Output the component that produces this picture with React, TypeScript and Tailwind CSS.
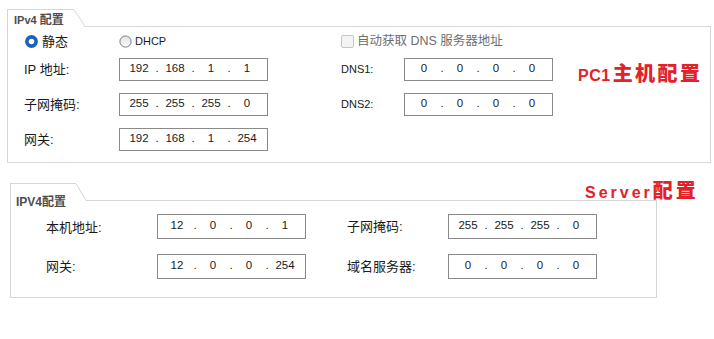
import React, { Fragment } from 'react';

const cjk = "font-['Liberation_Sans','Noto_Sans_CJK_SC',sans-serif]";

const TabHeader = ({ tabClass, slant, children }: { tabClass: string; slant: number; children: React.ReactNode }) => (
  <div className="flex h-[18px]">
    <div className={`border-l border-t border-[#d6d6d6] ${tabClass}`}>{children}</div>
    <svg width={slant} height={18} className="shrink-0">
      <line x1="0" y1="0.5" x2={slant} y2="17.5" stroke="#d6d6d6" strokeWidth="1" />
    </svg>
    <div className="flex-1 border-b border-[#d6d6d6]" />
  </div>
);

const IpBox = ({ parts, tall }: { parts: string[]; tall?: boolean }) => (
  <div
    className={`flex w-[149px] shrink-0 items-center border border-[#8a8a8a] bg-white pb-[2px] pl-[6px] font-['Liberation_Sans',sans-serif] text-[11.5px] text-[#1a1a1a] ${
      tall ? 'h-[25px]' : 'h-[23px]'
    }`}
  >
    {parts.map((p, i) => (
      <Fragment key={i}>
        <span className="w-[26px] text-center">{p}</span>
        {i < 3 && <span className="w-[10px] text-center">.</span>}
      </Fragment>
    ))}
  </div>
);

const Radio = ({ checked }: { checked?: boolean }) =>
  checked ? (
    <svg width="13" height="13" className="shrink-0">
      <circle cx="6.5" cy="6.5" r="4.6" fill="white" stroke="#1862b5" strokeWidth="3.6" />
    </svg>
  ) : (
    <svg width="13" height="13" className="shrink-0">
      <defs>
        <linearGradient id="rg" x1="0" y1="0" x2="0" y2="1">
          <stop offset="0" stopColor="#e4e4e4" />
          <stop offset="1" stopColor="#fafafa" />
        </linearGradient>
      </defs>
      <circle cx="6.5" cy="6.5" r="5.6" fill="url(#rg)" stroke="#7b7b7b" strokeWidth="1" />
    </svg>
  );

const Label = ({ className, children }: { className: string; children: React.ReactNode }) => (
  <div className={`shrink-0 ${cjk} text-[13px] leading-[16px] text-[#1a1a1a] ${className}`}>{children}</div>
);

const DnsLabel = ({ children }: { children: React.ReactNode }) => (
  <div className="w-[63px] shrink-0 font-['Liberation_Sans',sans-serif] text-[11px] text-[#1a1a1a]">{children}</div>
);

export default function App() {
  return (
    <div className="h-[339px] w-[714px] overflow-hidden bg-white">
      {/* PC1 */}
      <div className="ml-[7px] mt-[9px] w-[704px]">
        <TabHeader tabClass="w-[67px] pl-[6px] pt-[3px]" slant={11}>
          <div className="flex items-baseline gap-[3px] text-[#4d4d4d]">
            <span className="font-['Liberation_Sans',sans-serif] text-[11px] font-bold leading-[14px]">IPv4</span>
            <span className={`${cjk} text-[12px] font-bold leading-[14px]`}>配置</span>
          </div>
        </TabHeader>
        <div className="border-x border-b border-[#d6d6d6] pb-[11px] pl-[16px] pt-[6px]">
          <div className="flex h-[17px] items-center">
            <div className="flex w-[95px] items-center gap-[4px] pl-[1px]">
              <Radio checked />
              <span className={`${cjk} text-[13px] text-[#1a1a1a]`}>静态</span>
            </div>
            <div className="flex w-[222px] items-center gap-[3px]">
              <Radio />
              <span className="font-['Liberation_Sans',sans-serif] text-[11px] text-[#1a1a1a]">DHCP</span>
            </div>
            <div className="flex items-center gap-[3px]">
              <div className="h-[13px] w-[13px] rounded-[2px] border border-[#c6c6c6] bg-[#f4f4f4]" />
              <span className={`${cjk} text-[12.5px] text-[#6e6e6e]`}>自动获取 DNS 服务器地址</span>
            </div>
          </div>

          <div className="mt-[8px] flex h-[23px] items-center">
            <Label className="w-[95px]">IP 地址:</Label>
            <div className="w-[222px]">
              <IpBox parts={['192', '168', '1', '1']} />
            </div>
            <DnsLabel>DNS1:</DnsLabel>
            <IpBox parts={['0', '0', '0', '0']} />
            <div className="ml-[25px] mt-[10px] flex items-baseline text-[#e1222a]">
              <span className="font-['Liberation_Sans',sans-serif] text-[16px] font-bold leading-[18px] tracking-[0.5px]">PC1</span>
              <span className={`${cjk} ml-[2px] text-[20px] font-black leading-[18px] tracking-[2.5px]`}>主机配置</span>
            </div>
          </div>

          <div className="mt-[12px] flex h-[23px] items-center">
            <Label className="w-[95px]">子网掩码:</Label>
            <div className="w-[222px]">
              <IpBox parts={['255', '255', '255', '0']} />
            </div>
            <DnsLabel>DNS2:</DnsLabel>
            <IpBox parts={['0', '0', '0', '0']} />
          </div>

          <div className="mt-[12px] flex h-[23px] items-center">
            <Label className="w-[95px]">网关:</Label>
            <IpBox parts={['192', '168', '1', '254']} />
          </div>
        </div>
      </div>

      {/* Server */}
      <div className="relative ml-[10px] mt-[20px] w-[647px]">
        <TabHeader tabClass="w-[66px] pl-[5px] pt-[4px]" slant={10}>
          <span className={`${cjk} text-[12px] font-bold leading-[14px] text-[#4d4d4d]`}>IPV4配置</span>
        </TabHeader>
        <div className="border-x border-b border-[#d6d6d6] pb-[18px] pl-[35px] pt-[13px]">
          <div className="flex h-[25px] items-center">
            <Label className="w-[111px] pt-[3px]">本机地址:</Label>
            <div className="w-[190px]">
              <IpBox tall parts={['12', '0', '0', '1']} />
            </div>
            <Label className="w-[101px] pt-[1px]">子网掩码:</Label>
            <IpBox tall parts={['255', '255', '255', '0']} />
          </div>
          <div className="mt-[15px] flex h-[25px] items-center">
            <Label className="w-[111px] pt-[1px]">网关:</Label>
            <div className="w-[190px]">
              <IpBox tall parts={['12', '0', '0', '254']} />
            </div>
            <Label className="w-[101px]">域名服务器:</Label>
            <IpBox tall parts={['0', '0', '0', '0']} />
          </div>
        </div>

        <div className="absolute left-[575px] top-[-1px] flex items-baseline whitespace-nowrap text-[#e1222a]">
          <span className="font-['Liberation_Sans',sans-serif] text-[16px] font-bold leading-[18px] tracking-[3px]">Server</span>
          <span className={`${cjk} text-[20px] font-black leading-[18px] tracking-[3px]`}>配置</span>
        </div>
      </div>
    </div>
  );
}
